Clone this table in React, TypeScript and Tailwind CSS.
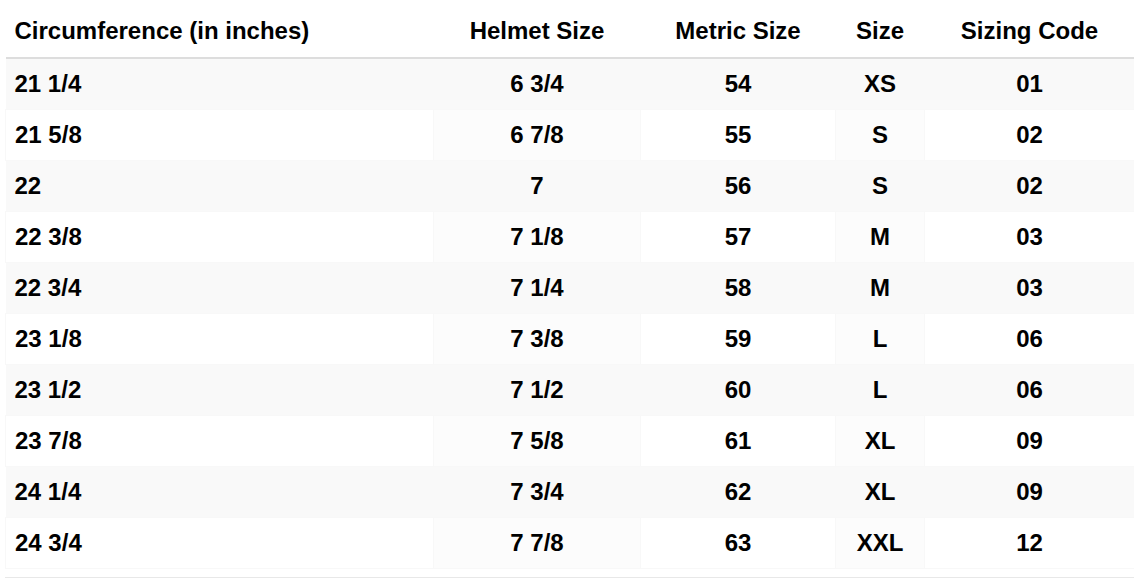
const rows = [
  ["21 1/4", "6 3/4", "54", "XS", "01"],
  ["21 5/8", "6 7/8", "55", "S", "02"],
  ["22", "7", "56", "S", "02"],
  ["22 3/8", "7 1/8", "57", "M", "03"],
  ["22 3/4", "7 1/4", "58", "M", "03"],
  ["23 1/8", "7 3/8", "59", "L", "06"],
  ["23 1/2", "7 1/2", "60", "L", "06"],
  ["23 7/8", "7 5/8", "61", "XL", "09"],
  ["24 1/4", "7 3/4", "62", "XL", "09"],
  ["24 3/4", "7 7/8", "63", "XXL", "12"],
]

const headers = ["Circumference (in inches)", "Helmet Size", "Metric Size", "Size", "Sizing Code"]
const widths = ["w-[428px]", "w-[207px]", "w-[195px]", "w-[89px]", "w-[210px]"]

export default function App() {
  return (
    <div className="w-[1134px] h-[578px] bg-white pl-[5px] font-['Liberation_Sans',Arial,sans-serif] text-black">
      <div className="pb-[8px] border-b-2 border-[#e8e8e8]">
        <table className="w-[1129px] table-fixed border-collapse">
          <thead>
            <tr className="h-[58px] border-b-2 border-[#dddddd]">
              {headers.map((h, i) => (
                <th
                  key={h}
                  className={`${widths[i]} text-[24px] font-bold leading-none pt-[4px] ${i === 0 ? "text-left pl-[9px]" : "text-center"}`}
                >
                  {h}
                </th>
              ))}
            </tr>
          </thead>
          <tbody>
            {rows.map((r, ri) => (
              <tr key={ri} className={`h-[51px] ${ri % 2 === 0 ? "bg-[#f9f9f9]" : "bg-white"}`}>
                {r.map((c, ci) => (
                  <td
                    key={ci}
                    className={`text-[24px] font-bold leading-none ${ci === 0 ? "text-left pl-[9px]" : "text-center"} ${
                      ri % 2 === 1 ? (ci % 2 === 1 ? "bg-[#fcfcfc] border border-[#f8f8f8]" : "border border-[#f8f8f8]") : ""
                    }`}
                  >
                    {c}
                  </td>
                ))}
              </tr>
            ))}
          </tbody>
        </table>
      </div>
    </div>
  )
}
